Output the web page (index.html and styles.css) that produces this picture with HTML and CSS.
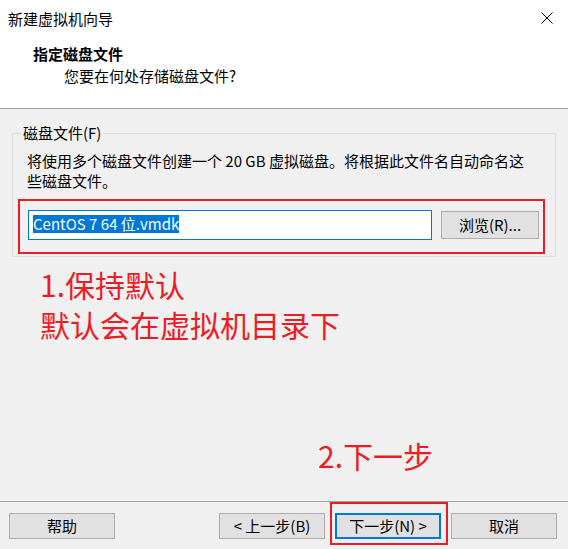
FILE: index.html
```html
<!DOCTYPE html>
<html lang="zh-CN">
<head>
<meta charset="utf-8">
<title>新建虚拟机向导</title>
<link rel="stylesheet" href="styles.css">
</head>
<body>
<div class="window">
  <div class="header">
    <div class="titlebar">
      <span class="title">新建虚拟机向导</span>
      <svg class="close" width="12" height="12" viewBox="0 0 12 12"><path d="M0.5 0.5 L11.5 11.5 M11.5 0.5 L0.5 11.5" stroke="#000" stroke-width="1" fill="none"/></svg>
    </div>
    <div class="heading">指定磁盘文件</div>
    <div class="subheading">您要在何处存储磁盘文件?</div>
  </div>
  <div class="main">
    <fieldset class="group">
      <legend class="legend">磁盘文件(F)</legend>
      <p class="desc">将使用多个磁盘文件创建一个 20 GB 虚拟磁盘。将根据此文件名自动命名这<br>些磁盘文件。</p>
      <div class="filerow">
        <div class="textbox"><span class="sel">CentOS 7 64 位.vmdk</span></div>
        <button class="btn browse">浏览(R)...</button>
      </div>
    </fieldset>
    <div class="note note1">1.保持默认<br>默认会在虚拟机目录下</div>
    <div class="note note2">2.下一步</div>
  </div>
  <div class="footer">
    <button class="btn help">帮助</button>
    <div class="navbtns">
      <button class="btn">&lt; 上一步(B)</button>
      <button class="btn next">下一步(N) &gt;</button>
      <button class="btn">取消</button>
    </div>
  </div>
</div>
</body>
</html>
```
FILE: styles.css
```css
* { box-sizing: border-box; }
html, body {
  margin: 0;
  padding: 0;
  background: #f0f0f0;
}
body {
  font-family: "Noto Sans CJK SC", "Noto Sans", sans-serif;
  font-size: 15px;
  line-height: 20px;
  color: #000;
}
.window {
  width: 568px;
  height: 549px;
  display: flex;
  flex-direction: column;
  overflow: hidden;
}
.header {
  background: #fff;
  height: 109px;
  border-bottom: 1px solid #a0a0a0;
}
.titlebar {
  display: flex;
  justify-content: space-between;
  align-items: center;
  padding: 9px 15px 0 8px;
  height: 29px;
}
.title {
  line-height: 20px;
}
.close {
  display: block;
  margin-top: -2px;
}
.heading {
  margin-top: 14px;
  padding-left: 33px;
  font-weight: bold;
  line-height: 22px;
}
.subheading {
  padding-left: 64px;
  line-height: 22px;
}
.main {
  flex: 1;
  display: flex;
  flex-direction: column;
}
.group {
  margin: 14px 0 0 12px;
  width: 544px;
  padding: 0 0 2px 0;
  border: 1px solid #dcdcdc;
  min-width: 0;
}
.legend {
  margin-left: 8px;
  padding: 0 2px;
  line-height: 20px;
}
.desc {
  margin: 8px 0 0 14px;
  line-height: 20px;
}
.filerow {
  margin: 8px 0 0 5px;
  width: 527px;
  height: 55px;
  border: 2px solid #ed1c24;
  display: flex;
  align-items: flex-start;
  padding: 9px 0 0 8px;
  gap: 9px;
}
.textbox {
  width: 404px;
  height: 30px;
  background: #fff;
  border: 1px solid #0078d7;
  padding: 4px 0 0 4px;
  line-height: 18px;
  white-space: nowrap;
}
.sel {
  background: #0078d7;
  color: #fff;
  display: inline-block;
  line-height: 18px;
}
.btn {
  font-family: "Noto Sans CJK SC", "Noto Sans", sans-serif;
  font-size: 15px;
  line-height: 20px;
  color: #000;
  background: #e1e1e1;
  border: 1px solid #adadad;
  width: 106px;
  height: 26px;
  padding: 0;
  margin: 0;
}
.browse {
  width: 98px;
  height: 28px;
  margin-top: 1px;
}
.note {
  color: #ed1c24;
  font-size: 30px;
  line-height: 40px;
}
.note1 {
  margin-top: 7px;
  padding-left: 40px;
}
.note2 {
  margin-top: 91px;
  padding-left: 318px;
}
.footer {
  height: 48px;
  border-top: 1px solid #a0a0a0;
  display: flex;
  justify-content: space-between;
  padding: 11px 11px 0 9px;
}
.navbtns {
  display: flex;
  gap: 10px;
}
.next {
  position: relative;
  border: 2px solid #0078d7;
}
.next::after {
  content: "";
  position: absolute;
  left: -7px;
  right: -9px;
  top: -13px;
  bottom: -8px;
  border: 2px solid #ed1c24;
}
```
